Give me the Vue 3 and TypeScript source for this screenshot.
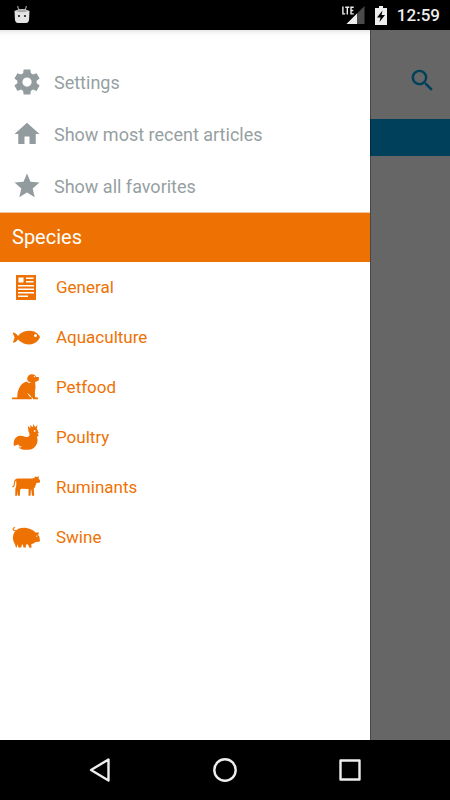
<script setup lang="ts">
interface MenuItem {
  label: string
  icon: string
}

interface SpeciesItem {
  label: string
  paths: string[]
}

const menu: MenuItem[] = [
  {
    label: 'Settings',
    icon: 'M14.7 2l.4 3c.7.3 1.200.6 1.700 1l2.800-1.100 2.500 4.300-2.400 1.800a8 8 0 0 1 0 2l2.400 1.800-2.500 4.300-2.800-1.100c-.5.4-1 .7-1.700 1l-.4 3H9.300l-.4-3c-.7-.3-1.200-.6-1.700-1l-2.800 1.100-2.500-4.300L4.300 13a8 8 0 0 1 0-2L1.900 9.200l2.500-4.300L7.200 6c.5-.4 1-.7 1.700-1l.4-3zM12 8.300a3.700 3.700 0 1 0 0 7.400 3.700 3.700 0 0 0 0-7.400z',
  },
  { label: 'Show most recent articles', icon: 'M10 20v-6h4v6h5v-8h3L12 3 2 12h3v8z' },
  {
    label: 'Show all favorites',
    icon: 'M12 17.270L18.180 21l-1.640-7.030L22 9.240l-7.190-.61L12 2 9.190 8.630 2 9.240l5.460 4.730L5.820 21z',
  },
]

const species: SpeciesItem[] = [
  {
    label: 'General',
    paths: [
      'M4 2h20v25H4zM6.500 4.500v5h5v-5zM14 4.500V6h7.500V4.500zM14 8v1.500h7.500V8zM6 12v1.500h16V12zM6 15.500V17h16v-1.500zM6 19v1.500h16V19zM6 22.500V24h10v-1.500z',
    ],
  },
  {
    label: 'Aquaculture',
    paths: [
      'M.6 9.600C3 9.800 4.600 11.200 6 12.900 9 9.300 13 7.700 17.500 7.700c5.200 0 9.200 3 10.500 6.300-1.300 4-5.500 7.400-10.500 7.400-4.500 0-8.500-2-11.500-5-1.300 1.800-2.700 3-5.100 3.300L2.600 14.500zM23.500 11.100a1.500 1.500 0 1 0 0 3 1.500 1.500 0 0 0 0-3z',
    ],
  },
  {
    label: 'Petfood',
    paths: [
      'M15.200 6.300c0-3.200 2.200-5.100 4.900-5.100 1.800 0 3.100.8 3.900 2.500l3 .6-.2 3c-1 .9-2 1.300-3.400 1.400-.7 2 .4 3.900 0 6.200-.3 1.700-.4 3-.5 4.700l.1 4.700h1.400c1.700 0 1.600.7 1.600 1.900h-6c-.3-2.700-2.200-4.500-4.700-6.300 1 1.900 2 2.800 2.500 3.900l3 1.200.2 1.200H.1c-.5-1.100-.2-1.800.9-1.800h4.300c-.1-4.400.9-8 3-11.400 1.800-2.700 4.300-3.900 6.700-4.500 1.300 1.600 3 2 4.500 1.100-2.300-.2-3.900-1.100-4.300-3.300zM22.400 2.900a.7.700 0 1 0 0 1.400.7.700 0 0 0 0-1.400z',
    ],
  },
  {
    label: 'Poultry',
    paths: [
      'M2 23.200C.8 17.500 3.400 13 8 12.800c3.200-.1 5 1.700 7.700 1 2.300-.6 2.400-3 .8-5.400L15.800 3l2.500 2.200L18.200 2l2.300 2.300L21.700 1l1.300 3.200L25.400 2l-.6 3.900c1 .9 1.300 1.900 1.200 2.900l1.100 1.100-1.500.5 1 2.500-1.800.8c1 2.300 1 4.800 0 7.200-1.500 3.500-4.600 5.700-8.600 5.900-3.800.2-7.500-.4-10-2.400 1.700.2 3 0 4-.7-1.600 0-2.700-.2-3.600-.6l1-1.300c-2.200-.2-3.700.3-5.600 1.400zM22.700 7a.9.9 0 1 0 0 1.800.9.900 0 0 0 0-1.800z',
    ],
  },
  {
    label: 'Ruminants',
    paths: [
      'M5 5.500h15.500l2.500-1-.3-1.200 2 .8h.8l1.300-1.100-.2 2.300 2 3-.6 1.200-3.500.4-1.700 4.500-1 1 .4 7.300h-2.200l-.7-6h-.4l-.4 6h-2l.1-6.700-7.300-.2-1.200 1-.2 5.900H5.900l-.2-4.400-.6 4.400H3.200l.2-7.500c1.200-2 .8-3.200.8-7.700-1 .8-1.200 2.500-1.400 4.500-.2 1.600-.9 2.200-2.500 2.200l-.2-1c1.300 0 1.500-.7 1.600-1.800.2-3.300 1-5.500 3.300-5.900z',
    ],
  },
  {
    label: 'Swine',
    paths: [
      'M3 8.600c2.500-3.500 7-4.200 11.500-3.700 4.300.5 7.200 2.500 9 4.500l3.500.2-.9 2.500 1.300 1.600.6 4.300-1 .8-3.500.2c-1.300 1.200-2.700 1.800-4.200 2.200l.2 3.600h-2l-1.500-3.200h-2l-.2 2.900h-2.300l-.7-3-1 .2-.5 2.800H6.400l-.8-3.200-.9 3.200H3.900C3.600 21.300.9 19 .9 15.200c0-2.700.7-4.900 2.100-6.600zM24.800 12.400a.7.7 0 1 0 0 1.400.7.7 0 0 0 0-1.400z',
      'M4 7.700C1.800 8.300.5 7.400.6 5.900.7 4.500 2 3.800 3.400 4.400l-.4.900c-.8-.3-1.400 0-1.400.7 0 .8.8 1.100 2.200.7z',
    ],
  },
]
</script>

<template>
  <div class="screen">
    <header class="status">
      <svg class="robot" viewBox="0 0 16 18" aria-hidden="true">
        <path d="M3.500 0l1.500 4M12.500 0l-1.500 4" stroke="#999" stroke-width="1.200" />
        <path d="M.5 5q7.500-4 15 0l-.5 9q-.5 3-3 3H4q-2.500 0-3-3z" fill="#e4e4e4" />
        <path d="M1.500 5q6.500-3 13 0-6.500 2.500-13 0z" fill="#aaa" />
        <path d="M4 9h2v2H4zM10 9h2v2h-2z" fill="#444" />
      </svg>
      <div class="indicators">
        <svg class="signal" viewBox="0 0 24 20" aria-hidden="true">
          <path d="M23.500 1v18h-18z" fill="#4b4b4b" />
          <path d="M16 8.500V19H5.500z" fill="#eee" />
          <path d="M1.900 1.500v7.400h2.300M4.300 2.200h4M6.300 2.200v7.300M12.700 2.200h-2.700v6.700h2.700M10 5.500h2.300" fill="none" stroke="#eee" stroke-width="1.400" />
        </svg>
        <svg class="battery" viewBox="0 0 12 19" aria-hidden="true">
          <path d="M4 0h4v2h4v17H0V2h4zM7.500 4.500L2 11.500h3.500L4.500 16 10 9H6.500z" fill="#eee" fill-rule="evenodd" />
        </svg>
        <time class="clock">12:59</time>
      </div>
    </header>

    <div class="body">
      <main class="page">
        <div class="toolbar">
          <button class="search" type="button" aria-label="Search">
            <svg viewBox="0 0 24 24" aria-hidden="true">
              <path
                d="M15.500 14h-.79l-.28-.27A6.470 6.470 0 0 0 16 9.500 6.500 6.500 0 1 0 9.500 16c1.610 0 3.090-.59 4.230-1.570l.27.28v.79l5 4.990L20.490 19zm-6 0a4.500 4.500 0 1 1 0-9 4.500 4.500 0 0 1 0 9z"
              />
            </svg>
          </button>
        </div>
        <div class="band"></div>
      </main>
      <div class="scrim"></div>
      <nav class="drawer">
        <ul class="menu">
          <li v-for="item in menu" :key="item.label">
            <a href="#" class="menu-link">
              <svg viewBox="0 0 24 24" aria-hidden="true"><path :d="item.icon" fill-rule="evenodd" /></svg>
              <span>{{ item.label }}</span>
            </a>
          </li>
        </ul>
        <h2 class="heading">Species</h2>
        <ul class="species">
          <li v-for="item in species" :key="item.label">
            <a href="#" class="species-link">
              <svg viewBox="0 0 28 28" aria-hidden="true">
                <path v-for="d in item.paths" :key="d" :d="d" fill-rule="evenodd" />
              </svg>
              <span>{{ item.label }}</span>
            </a>
          </li>
        </ul>
      </nav>
    </div>

    <footer class="navbar">
      <button type="button" aria-label="Back">
        <svg viewBox="0 0 24 24" aria-hidden="true"><path d="M20.500 1.500v21L3 12z" /></svg>
      </button>
      <button type="button" aria-label="Home">
        <svg viewBox="0 0 24 24" aria-hidden="true"><circle cx="12" cy="12" r="10.700" /></svg>
      </button>
      <button type="button" aria-label="Recent apps">
        <svg viewBox="0 0 24 24" aria-hidden="true"><path d="M2.500 2.500h19v19h-19z" /></svg>
      </button>
    </footer>
  </div>
</template>

<style>
body {
  margin: 0;
  background: #000;
}
</style>

<style scoped>
.screen {
  display: flex;
  flex-direction: column;
  min-height: 100vh;
  font-family: Roboto, "Noto Sans", sans-serif;
}

svg {
  display: block;
  flex: none;
}

button {
  padding: 0;
  border: 0;
  background: none;
}

ul {
  margin: 0;
  padding: 0;
  list-style: none;
}

.status {
  display: flex;
  align-items: center;
  justify-content: space-between;
  height: 30px;
  padding: 0 10px 0 14px;
  background: #000;
}

.robot {
  width: 16px;
  height: 18px;
}

.indicators {
  display: flex;
  align-items: center;
  gap: 10px;
}

.signal {
  width: 24px;
  height: 20px;
}

.battery {
  width: 12px;
  height: 19px;
}

.clock {
  color: #eee;
  font-size: 17px;
  font-weight: 500;
  line-height: 30px;
}

.body {
  position: relative;
  display: flex;
  flex: 1;
}

.page {
  flex: 1;
  background: #fff;
}

.toolbar {
  display: flex;
  align-items: center;
  justify-content: flex-end;
  height: 89px;
  padding: 12px 13px 0;
  box-sizing: border-box;
}

.search svg {
  width: 29px;
  height: 29px;
  fill: #00a0e4;
}

.band {
  height: 37px;
  background: #00a0e4;
}

.scrim {
  position: absolute;
  inset: 0;
  background: rgba(0, 0, 0, 0.6);
}

.drawer {
  position: absolute;
  inset: 0 80px 0 0;
  background: #fff;
  box-shadow: 1px 0 0 rgba(0, 0, 0, 0.3), inset 0 6px 6px -6px rgba(0, 0, 0, 0.2);
}

.menu {
  padding-top: 26px;
}

.menu-link,
.species-link {
  display: flex;
  align-items: center;
  padding: 0 12px;
  text-decoration: none;
}

.menu-link {
  gap: 12px;
  height: 52px;
  color: #96a0a2;
  font-size: 18px;
}

.menu-link svg {
  width: 30px;
  height: 30px;
  fill: #929c9e;
}

.heading {
  margin: 0;
  padding: 0 12px;
  border-top: 1px solid #f6c6a0;
  background: #ee7203;
  color: #fff;
  font-size: 20px;
  font-weight: 400;
  line-height: 49px;
}

.species-link {
  gap: 16px;
  height: 50px;
  color: #ee7203;
  font-size: 17px;
}

.species-link svg {
  width: 28px;
  height: 28px;
  fill: #ee7203;
}

.navbar {
  display: flex;
  align-items: center;
  justify-content: center;
  gap: 101px;
  height: 60px;
  background: #000;
}

.navbar svg {
  width: 24px;
  height: 24px;
  fill: none;
  stroke: #eee;
  stroke-width: 2.4;
  stroke-linejoin: round;
}
</style>
